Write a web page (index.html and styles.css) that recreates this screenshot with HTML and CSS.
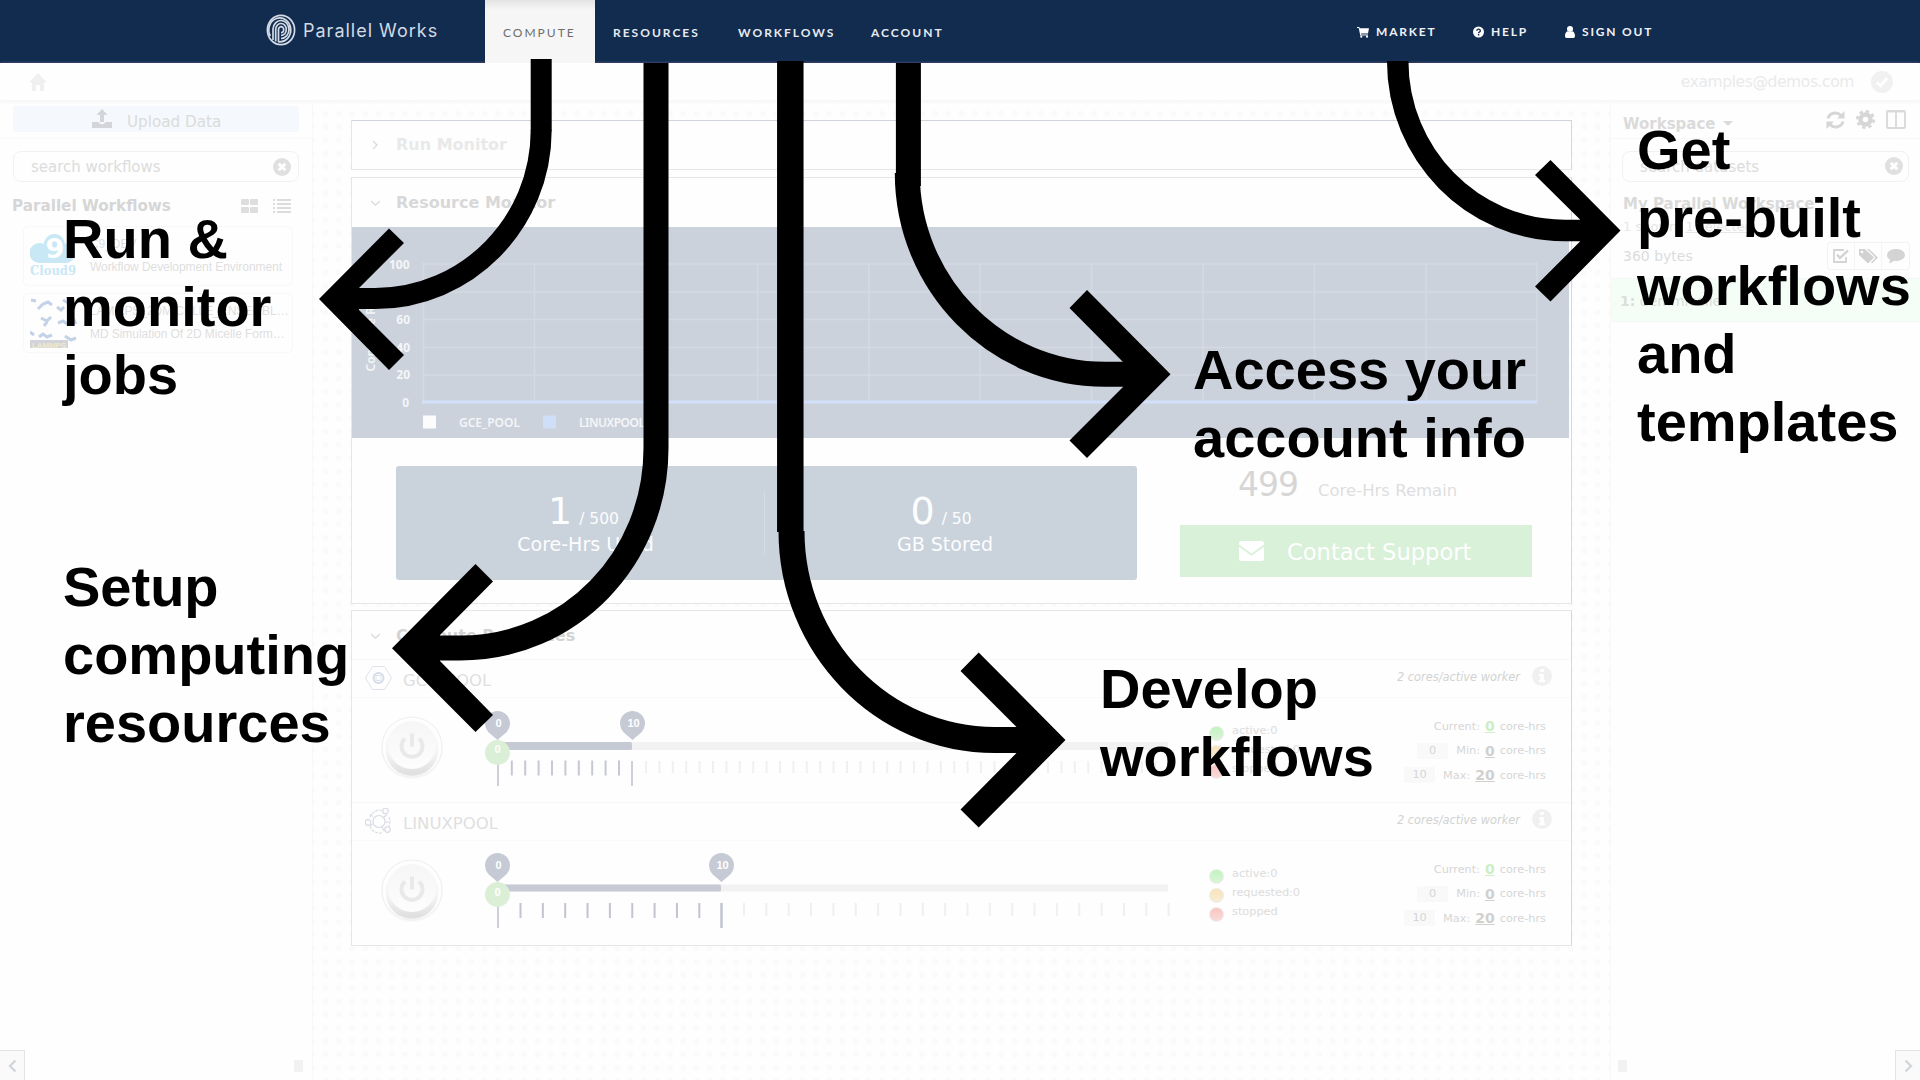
FILE: index.html
```html
<!DOCTYPE html>
<html lang="en">
<head>
<meta charset="utf-8">
<title>Parallel Works - Compute</title>
<link rel="stylesheet" href="styles.css">
</head>
<body>
<svg class="defs" width="0" height="0" aria-hidden="true">
  <defs>
    <linearGradient id="knob" x1="0" y1="0" x2="0" y2="1"><stop offset="0" stop-color="#f6f6f6"/><stop offset="1" stop-color="#fdfdfd"/></linearGradient>
    <linearGradient id="rim" x1="0" y1="0" x2="0" y2="1"><stop offset="0" stop-color="#fdfdfd"/><stop offset=".6" stop-color="#f4f4f4"/><stop offset="1" stop-color="#dedede"/></linearGradient>
    <symbol id="clear" viewBox="0 0 18 18"><circle cx="9" cy="9" r="9" fill="#e0e0e0"/><path d="M5.7 5.7l6.600 6.600M12.300 5.700l-6.600 6.600" stroke="#fff" stroke-width="3"/></symbol>
    <symbol id="info" viewBox="0 0 20 20"><circle cx="10" cy="10" r="10" fill="#f0f0f0"/><path d="M8.300 3h3.400v3H8.300zM7 8h4.800v6H13v2.300H7V14h1.300v-3.700H7z" fill="#fff"/></symbol>
    <symbol id="power" viewBox="0 0 64 68">
      <circle cx="32" cy="34" r="31" fill="#f8f8f8"/><circle cx="32" cy="33" r="30" fill="#fefefe" stroke="#efefef"/>
      <circle cx="32" cy="36" r="26" fill="#e6e6e6"/><circle cx="32" cy="34.500" r="26.500" fill="url(#rim)"/><circle cx="32" cy="31" r="24" fill="url(#knob)"/>
      <path d="M25 24.500a10.500 10.500 0 1 0 14 0M32 19.500v13" fill="none" stroke="#e9e9e9" stroke-width="4"/>
    </symbol>
    <symbol id="pin" viewBox="0 0 25 29"><path d="M12.500 29L3.200 20.900A12.500 12.500 0 1 1 21.800 20.900z" fill="#c5cad4"/></symbol>
  </defs>
</svg>

<header class="topbar">
  <div class="brand">
    <svg width="30" height="32" viewBox="0 0 30 32" fill="none" stroke="#d5dbe5" stroke-width="1.700">
      <ellipse cx="15" cy="16" rx="13.600" ry="14.700"/>
      <path d="M7 26V15a8 9 0 1 1 8 9.500M4.300 22a11 12 0 1 1 8 5.800M9.700 27.500V15.500a5.300 6 0 1 1 5.300 6M12.500 28V16a2.600 3 0 1 1 2.500 2.700"/>
    </svg>
    <span class="brand-name">Parallel Works</span>
  </div>
  <nav class="tabs">
    <a class="tab active">COMPUTE</a>
    <a class="tab">RESOURCES</a>
    <a class="tab">WORKFLOWS</a>
    <a class="tab">ACCOUNT</a>
  </nav>
  <nav class="links">
    <a class="link market"><svg width="12" height="12" viewBox="0 0 12 12" fill="#fff"><path d="M0 1h2.300l.4 1.300H12L11 7.500H4l.2 1H11v1H3.300L1.700 2H0z"/><circle cx="4.300" cy="10.700" r="1.100"/><circle cx="10" cy="10.700" r="1.100"/></svg>MARKET</a>
    <a class="link help"><svg width="11" height="12" viewBox="0 0 12 12"><circle cx="6" cy="6" r="6" fill="#fff"/><path d="M4.200 4.600a1.900 1.700 0 1 1 2.700 1.500q-.8.4-.8 1.200M6.100 8.300v1.500" fill="none" stroke="#122c50" stroke-width="1.500"/></svg>HELP</a>
    <a class="link signout"><svg width="10" height="12" viewBox="0 0 10 12" fill="#fff"><circle cx="5" cy="3" r="3"/><path d="M0 10.300C0 7.500 1 5.800 2.600 5.300q2.400 1.600 4.800 0C9 5.800 10 7.500 10 10.300Q10 12 8.400 12H1.600Q0 12 0 10.300z"/></svg>SIGN OUT</a>
  </nav>
</header>

<div class="userbar">
  <svg class="home" width="18" height="18" viewBox="0 0 18 18" fill="#f0f0f0"><path d="M9 0L18 9.500h-3V18h-4v-6H7v6H3V9.500H0z"/></svg>
  <span class="email">examples@demos.com</span>
  <svg width="22" height="22" viewBox="0 0 22 22"><circle cx="11" cy="11" r="11" fill="#f1f1f1"/><path d="M6 11.500l3.500 3.500L16 7" fill="none" stroke="#fff" stroke-width="2.800"/></svg>
</div>

<div class="workspace">
  <aside class="left">
    <div class="upload-row">
      <div class="upload"><svg width="20" height="19" viewBox="0 0 20 19" fill="#d3d5d8"><path d="M10 0l5.500 6H12v7H8V6H4.500zM0 13h6.500q1 2.300 3.500 2.300t3.500-2.300H20v6H0z"/></svg><span>Upload Data</span></div>
    </div>
    <div class="search"><span class="ph-workflows">search workflows</span><svg width="18" height="18"><use href="#clear"/></svg></div>
    <div class="list-head"><span class="list-title">Parallel Workflows</span>
      <svg width="17" height="14" viewBox="0 0 17 14" fill="#dedede"><rect width="8" height="6" rx="1"/><rect x="9" width="8" height="6" rx="1"/><rect y="8" width="8" height="6" rx="1"/><rect x="9" y="8" width="8" height="6" rx="1"/></svg>
      <svg class="list-icon" width="18" height="14" viewBox="0 0 18 14" fill="#dcdcdc"><path d="M0 0h2v2H0zM4 0h14v2H4zM0 4h2v2H0zM4 4h14v2H4zM0 8h2v2H0zM4 8h14v2H4zM0 12h2v2H0zM4 12h14v2H4z"/></svg>
    </div>
    <div class="flow">
      <svg width="48" height="46" viewBox="0 0 48 46"><path d="M9 30a9 9.500 0 0 1 0-20c2 0 3 .2 4.500 1C15 5 19 1 24 1c6 0 10 4 11 9.500 6 0 10 4 10 9.500s-4 10-9 10z" fill="#c9e8f5"/><text x="15.500" y="25" class="c9-digit">9</text><text x="0" y="42" class="c9-name" textLength="46" lengthAdjust="spacingAndGlyphs">Cloud9</text></svg>
      <div class="flow-text"><span>C9_DEV</span><span>Workflow Development Environment</span></div>
    </div>
    <div class="flow">
      <svg width="48" height="50" viewBox="0 0 48 50"><g fill="none" stroke="#c3d2e6" stroke-width="3"><path d="M1 2l5 1M8 11l5-5 5-2 4 3M27 9l4 3 3-3M33 2l7 4M11 20l6 3 4-4M17 24l-3 4M28 25l5-2 4 3M43 20l3 6M0 34l4 3M9 39l4-3 4 3 5-2M35 38l6 4 5-2M44 3v8"/></g><rect y="42" width="38" height="8" fill="#d3d3dc"/><text x="2" y="49.500" class="lammps" textLength="34">LAMMPS</text></svg>
      <div class="flow-text"><span>LAMMPS_2DMICELLE_ENSEMBL…</span><span>MD Simulation Of 2D Micelle Form…</span></div>
    </div>
    <div class="foot foot-left"><div class="collapse"><svg width="9" height="14" viewBox="0 0 9 14" fill="none" stroke="#d2d6da" stroke-width="2.400"><path d="M7.500 1.500L2 7l5.500 5.500"/></svg></div><div class="grip"></div></div>
  </aside>

  <main class="main">
    <section class="panel run"><div class="panel-head faint"><svg width="9" height="10" viewBox="0 0 9 10"><path d="M2 1l4 4-4 4"/></svg><h2>Run Monitor</h2></div></section>

    <section class="panel monitor">
      <div class="panel-head"><svg width="9" height="10" viewBox="0 0 9 10"><path d="M0 3l4.500 4L9 3"/></svg><h2>Resource Monitor</h2></div>
      <div class="chart">
        <svg width="1217" height="211" viewBox="1 0.500 1217 211">
          <path d="M72 37.500H1186M72 65.500H1186M72 93H1186M72 121H1186M72 148.500H1186M72.500 36V176M183.500 36V176M295 36V176M406.500 36V176M518 36V176M629 36V176M740.500 36V176M852 36V176M963.500 36V176M1075 36V176M1186 36V176" stroke="#d3dae3" stroke-width="1.500"/>
          <path d="M71 175.500H1186" stroke="#d2e0f9" stroke-width="3"/>
          <g class="axis" text-anchor="end"><text x="58.500" y="42">100</text><text x="59" y="69">80</text><text x="59" y="97">60</text><text x="59" y="125">40</text><text x="59" y="152">20</text><text x="58" y="180">0</text></g>
          <text class="axis key" transform="translate(24 145) rotate(-90)">Compute Rate</text>
          <rect x="72" y="189" width="13" height="13" fill="#fcfcfc"/><text class="axis key" x="108" y="200.500" textLength="61">GCE_POOL</text>
          <rect x="192" y="189" width="13" height="13" fill="#d0dff8"/><text class="axis key" x="228" y="200.500" textLength="66">LINUXPOOL</text>
        </svg>
      </div>
      <div class="usage">
        <div class="stats">
          <div class="stat used"><div class="stat-line"><b>1</b><span>/ 500</span></div><div class="stat-name">Core-Hrs Used</div></div>
          <div class="divider"></div>
          <div class="stat stored"><div class="stat-line"><b>0</b><span>/ 50</span></div><div class="stat-name">GB Stored</div></div>
        </div>
        <div class="remain">
          <div class="remain-line"><span class="num">499</span><span class="cap">Core-Hrs Remain</span></div>
          <div class="support"><svg width="25" height="20" viewBox="0 0 25 20" fill="#fff"><path d="M0 3V2.500Q0 0 2.500 0h20Q25 0 25 2.500V3.500L12.500 12.500 0 3.500zM0 5.800l12.500 9L25 5.800V17.500Q25 20 22.500 20h-20Q0 20 0 17.500z"/></svg><span>Contact Support</span></div>
        </div>
      </div>
    </section>

    <section class="panel compute">
      <div class="panel-head"><svg width="9" height="10" viewBox="0 0 9 10"><path d="M0 3l4.500 4L9 3"/></svg><h2>Compute Resources</h2></div>

      <div class="pool-head">
        <svg class="pool-icon" width="27" height="24" viewBox="0 0 27 24" fill="none" stroke="#dfe2ea"><path d="M7.500.5h12L26.500 12l-7 11.500h-12L.5 12z"/><circle cx="13.500" cy="12" r="5" stroke="#d6dde8" stroke-width="2"/><rect x="11" y="9.500" width="5" height="5"/></svg>
        <span class="pool-name">GCE_POOL</span><em>2 cores/active worker</em><svg class="pool-info" width="20" height="20"><use href="#info"/></svg>
      </div>
      <div class="pool">
        <svg class="power" width="64" height="68"><use href="#power"/></svg>
        <svg class="slider" width="700" height="90" viewBox="0 0 700 90">
          <rect x="14" y="35" width="671" height="8" fill="#f2f2f2"/><rect x="14" y="35" width="135" height="8" rx="1.500" fill="#c5cad4"/>
          <path d="M27.800 61H148" stroke="#c6c8d2" stroke-width="15" stroke-dasharray="2 11.400"/>
          <path d="M162 60H686" stroke="#f0f0f0" stroke-width="12" stroke-dasharray="2 11.400"/>
          <path d="M15 54v25M149 54v25" stroke="#cdd0d7" stroke-width="2"/>
          <use href="#pin" x="2" y="4" width="25" height="29"/><use href="#pin" x="137" y="4" width="25" height="29"/>
          <circle cx="14.500" cy="45.500" r="12.500" fill="#daefd5"/>
          <g class="pin-text"><text x="15.500" y="20">0</text><text x="150.500" y="20">10</text><text x="14.500" y="46">0</text></g>
        </svg>
        <ul class="status"><li><i class="led green"></i>active:0</li><li><i class="led amber"></i>requested:0</li><li><i class="led red"></i>stopped</li></ul>
        <div class="limits"><div><span>Current:</span><b class="on">0</b><span>core-hrs</span></div><div><span class="field">0</span><span>Min:</span><b>0</b><span>core-hrs</span></div><div><span class="field">10</span><span>Max:</span><b>20</b><span>core-hrs</span></div></div>
      </div>

      <div class="pool-head">
        <svg class="pool-icon" width="27" height="26" viewBox="0 0 27 26" fill="none" stroke="#d9dce4" stroke-width="1.200"><circle cx="14" cy="13.500" r="6"/><path d="M5 9a10.500 10.500 0 0 1 12-6.500M24 9q2 4.500 0 9M17 25Q8 26 5 18" stroke-dasharray="3 1"/><path d="M8 8.500l-3-2M19 9l3-2M17 19l2 4M7.500 16l-2.500 2M20 14h4"/><circle cx="3" cy="14.500" r="2.800"/><circle cx="20.500" cy="3" r="2.800"/><circle cx="22.500" cy="21.500" r="2.800"/></svg>
        <span class="pool-name">LINUXPOOL</span><em>2 cores/active worker</em><svg class="pool-info" width="20" height="20"><use href="#info"/></svg>
      </div>
      <div class="pool">
        <svg class="power" width="64" height="68"><use href="#power"/></svg>
        <svg class="slider" width="700" height="90" viewBox="0 0 700 90">
          <rect x="14" y="34.500" width="671" height="7" fill="#f2f2f2"/><rect x="14" y="34.500" width="224" height="7" rx="1.500" fill="#c5cad4"/>
          <path d="M36.500 60.500H237" stroke="#c2c4d0" stroke-width="15" stroke-dasharray="2 20.350"/>
          <path d="M260 59.500H687" stroke="#f0f0f0" stroke-width="13" stroke-dasharray="2 20.350"/>
          <path d="M15 53v25" stroke="#cdd0d7" stroke-width="2"/><path d="M238.500 53v25" stroke="#c2c4d0" stroke-width="2.500"/>
          <use href="#pin" x="2" y="3" width="25" height="29"/><use href="#pin" x="226" y="3" width="25" height="29"/>
          <circle cx="14.500" cy="44.500" r="12.500" fill="#daefd5"/>
          <g class="pin-text"><text x="15.500" y="19">0</text><text x="239.500" y="19">10</text><text x="14.500" y="46">0</text></g>
        </svg>
        <ul class="status"><li><i class="led green"></i>active:0</li><li><i class="led amber"></i>requested:0</li><li><i class="led red"></i>stopped</li></ul>
        <div class="limits"><div><span>Current:</span><b class="on">0</b><span>core-hrs</span></div><div><span class="field">0</span><span>Min:</span><b>0</b><span>core-hrs</span></div><div><span class="field">10</span><span>Max:</span><b>20</b><span>core-hrs</span></div></div>
      </div>
    </section>
  </main>

  <aside class="right">
    <div class="ws-head">
      <b class="ws-title">Workspace</b><i class="caret"></i>
      <svg width="19" height="18" viewBox="0 0 19 18" fill="none" stroke="#d6d6d6" stroke-width="3"><path d="M2 7.500A7.500 7 0 0 1 15 4.500M17 10.500A7.500 7 0 0 1 4 13.500"/><path d="M18.500 0v7.500h-7.500zM.5 18v-7.500H8z" fill="#d6d6d6" stroke="none"/></svg>
      <svg width="19" height="19" viewBox="0 0 19 19"><circle cx="9.500" cy="9.500" r="5" fill="none" stroke="#d6d6d6" stroke-width="4.400"/><circle cx="9.500" cy="9.500" r="8.200" fill="none" stroke="#d6d6d6" stroke-width="2.600" stroke-dasharray="3.300 3.140"/></svg>
      <svg width="20" height="19" viewBox="0 0 20 19" fill="none" stroke="#d9d9d9" stroke-width="1.800"><rect x="1" y="1" width="18" height="17" rx="1"/><path d="M10 1v17M1 1.700h18"/></svg>
    </div>
    <div class="search"><span class="ph-data">search datasets</span><svg width="18" height="18"><use href="#clear"/></svg></div>
    <b class="ws-name">My Parallel Workspace</b>
    <div class="shown">1 shown, <u>1 selected</u></div>
    <div class="bytes-row"><span>360 bytes</span>
      <div class="tools">
        <span><svg width="16" height="14" viewBox="0 0 16 14" fill="none" stroke="#d4d4d4" stroke-width="1.800"><path d="M13 8v5H1V1h10"/><path d="M4 5.500L7 9l8-7.500" stroke-width="2.400"/></svg></span>
        <span><svg width="19" height="15" viewBox="0 0 19 15" fill="#d2d2d2"><path d="M0 0h6l9 8.500-6 6L0 6zM8 0h2l9 8.500-6 6-1-1 4.500-5z"/><circle cx="3" cy="3" r="1.300" fill="#fff"/></svg></span>
        <span><svg width="18" height="15" viewBox="0 0 18 15" fill="#d4d4d4"><path d="M9 0c5 0 9 2.600 9 6s-4 6-9 6c-.8 0-1.500 0-2.200-.2C5.500 13.200 4 14.200 1.500 14.500 2.700 13.500 3 12.300 3 10.700 1 9.700 0 8 0 6c0-3.400 4-6 9-6z"/></svg></span>
      </div>
    </div>
    <div class="dataset"><b>1:</b> demmicelle</div>
    <div class="foot foot-right"><div class="grip"></div><div class="collapse"><svg width="9" height="14" viewBox="0 0 9 14" fill="none" stroke="#d2d6da" stroke-width="2.400"><path d="M1.500 1.500L7 7l-5.500 5.500"/></svg></div></div>
  </aside>
</div>

<svg class="arrows" width="1920" height="1080" viewBox="0 0 1920 1080">
  <g fill="none" stroke="#000">
    <path stroke-width="21" d="M541.200 130C541.200 223 467 298.500 375 298.500H345"/>
    <path stroke-width="15" d="M538.200 59V131M544.200 59V131"/>
    <path stroke-width="25" d="M656 63V448C656 558.500 570 648 460 648H420"/>
    <path stroke-width="26.500" d="M790.300 61V532"/>
    <path stroke-width="26" d="M791.500 531C791.500 646 882 740 995 740H1040"/>
    <path stroke-width="25" d="M908.400 63V186"/>
    <path stroke-width="25" d="M907.300 173C907.300 284 996 374.300 1105 374.300H1145"/>
    <path stroke-width="21.500" d="M1397.700 61C1397.700 154 1472 230.500 1565 230.500H1600"/>
  </g>
  <path d="M319 299L389 228.500 404 243 359 288V310L404 355 389 370z"/>
  <path d="M392 648.300L475.500 564 493 581.500 440 635V661L493 715 475.500 732z"/>
  <path d="M1065.500 740L978.700 652.500 960.500 671 1016.500 727V753L960.500 809.500 978.700 827.500z"/>
  <path d="M1170.500 374.300L1087 290 1069.500 308 1123 362V387L1069.500 440.500 1087 458z"/>
  <path d="M1620.500 230.500L1550.500 160 1535 175 1580 219.500V241.500L1535 286.500 1550.500 301.500z"/>
</svg>
<div class="note note-run">Run &amp;<br>monitor<br>jobs</div>
<div class="note note-setup">Setup<br>computing<br>resources</div>
<div class="note note-develop">Develop<br>workflows</div>
<div class="note note-account">Access your<br>account info</div>
<div class="note note-market">Get<br>pre-built<br>workflows<br>and<br>templates</div>
</body>
</html>
```

FILE: styles.css
```css
* { box-sizing: border-box; }
html, body { margin: 0; height: 100%; overflow: hidden; }
body {
  position: relative;
  display: flex;
  flex-direction: column;
  width: 1920px;
  height: 1080px;
  background: #fefefe;
  font-family: "DejaVu Sans", sans-serif;
  color: #d8d8d8;
}
svg { display: block; flex: none; }
span, a, b, em, h2 { white-space: nowrap; }
.defs { position: absolute; }

/* top bar */
.topbar { display: flex; flex: none; height: 63px; background: #122c50; border-bottom: 1px solid #0b1445; }
.brand { display: flex; align-items: center; gap: 7px; width: 485px; padding: 0 0 2px 266px; }
.brand-name { padding-top: 2px; font: 400 18px/20px Inter, sans-serif; letter-spacing: 1px; color: #d3dae4; }
.tabs { display: flex; font: 700 12px/63px Lato, sans-serif; letter-spacing: 2px; color: #e6eaf0; width: 872px; }
.tab { width: 125px; padding: 1px 0 0 18px; height: 62px; }
.tab.active { width: 110px; height: 63px; background: linear-gradient(#e4e4e4, #f6f6f6 10px); color: #6d6d6d; font-weight: 400; }
.tab:nth-child(3) { width: 133px; }
.links { display: flex; font: 700 12px/61px Lato, sans-serif; letter-spacing: 1.800px; color: #eef1f5; }
.link { display: flex; align-items: center; gap: 7px; padding-top: 1px; }
.market { width: 116px; }
.help { width: 92px; }

/* user bar */
.userbar { display: flex; flex: none; align-items: center; height: 38px; padding: 0 27px 0 29px; border-bottom: 1px solid #f8f8f8; box-shadow: 0 1px 3px #f3f3f3; }
.email { margin: 1px 17px 0 auto; font-size: 15.500px; letter-spacing: -.4px; color: #eaeaea; }

.workspace { display: grid; grid-template-columns: 313px 1297px 310px; flex: 1; min-height: 0; }
.left, .right { display: flex; flex-direction: column; min-width: 0; }
.left { border-right: 1px solid #f8f8f8; }
.right { border-left: 1px solid #f8f8f8; }

/* left column */
.upload-row { height: 38px; padding: 5px 13px; border-bottom: 1px solid #fafafa; }
.upload { display: flex; align-items: center; height: 26px; padding-left: 79px; gap: 15px; border-radius: 3px; background: #f5f8fd; font-size: 15.200px; color: #dadcda; }
.upload svg { margin-top: -1px; }
.upload span { padding-top: 6px; }
.search { display: flex; align-items: center; justify-content: space-between; flex: none; height: 31px; margin: 12px 13px 0; padding: 0 7px 0 17px; border: 1px solid #f1f1f1; border-radius: 8px; font-size: 15px; color: #dcdcdc; }
.list-head { display: flex; align-items: center; height: 44px; padding: 3px 21px 0 12px; }
.list-title { margin-right: auto; font-weight: 700; font-size: 15.200px; color: #d6d6d6; }
.list-icon { margin-left: 15px; }
.flow { display: flex; align-items: center; gap: 12px; height: 60px; margin: 0 19px 7px 23px; padding-left: 6px; border: 1px solid #f8f8f8; border-radius: 5px; }
.flow-text { display: flex; flex-direction: column; gap: 8px; font: 12px/15px "Liberation Sans", sans-serif; letter-spacing: -.06px; color: #dedede; }
.c9-digit { font: 700 27px "DejaVu Sans", sans-serif; fill: #fff; }
.c9-name { font: 700 12px "DejaVu Serif", serif; fill: #c9e8f5; }
.lammps { font: 700 8px "Liberation Sans", sans-serif; fill: #efeac8; }
.foot { display: flex; justify-content: space-between; align-items: flex-end; margin-top: auto; height: 30px; }
.collapse { display: flex; align-items: center; justify-content: center; width: 25px; height: 30px; border: 1px solid #e4e4e4; border-bottom: 0; background: #fafafa; }
.foot-left .collapse { border-left: 0; }
.foot-right .collapse { border-right: 0; }
.grip { width: 9px; height: 12px; margin: 0 9px 8px 7px; background: #f2f2f2; }

/* centre column */
.main { padding: 19px 38px 0; background: radial-gradient(circle, #fafafa 2.600px, transparent 3.400px) 6px 6px / 13.250px 13.250px; }
.panel { display: flex; flex-direction: column; width: 1221px; border: 1px solid #e4e6e9; border-right-color: #d6d8de; background: #fefefe; }
.panel-head { display: flex; align-items: center; gap: 16px; flex: none; padding-left: 19px; height: 48px; color: #d8d8d8; }
.panel-head path { fill: none; stroke: #dcdcdc; stroke-width: 1.400; }
.panel-head h2 { margin: 0; font-size: 16px; line-height: 20px; }
.panel-head.faint { color: #e9e9e9; }
.run { height: 50px; margin-bottom: 7px; border-top-color: #cfd4dc; }
.monitor { height: 427px; margin-bottom: 6px; }
.monitor .panel-head { height: 49px; }
.compute { height: 336px; }
.compute .panel-head { height: 48px; padding-top: 2px; }
.compute h2 { color: #d3d3d3; }
.chart { flex: none; height: 211px; margin-right: 2px; background: #cbd2dc; }
.axis { font: 700 12px "Noto Sans", sans-serif; fill: #f4f6f8; }
.key { font-weight: 600; }
.usage { display: flex; gap: 43px; padding: 28px 38px 0 44px; }
.stats { display: flex; width: 741px; height: 114px; padding-top: 25px; border-radius: 3px; background: #cad2dc; color: #fcfdfd; }
.stat { display: flex; flex-direction: column; align-items: center; width: 368px; }
.stat-line { display: flex; align-items: baseline; gap: 7px; height: 41px; line-height: 41px; }
.stat-line b { font-weight: 400; font-size: 38px; }
.stat-line span { font-size: 15.500px; }
.stat-name { font-size: 19px; line-height: 24px; }
.used { padding-left: 11px; }
.used .stat-line { padding-right: 4px; }
.stored { width: 360px; }
.stored .stat-line { padding-right: 8px; }
.divider { width: 1px; height: 64px; background: #d5dbe4; }
.remain { width: 352px; }
.remain-line { display: flex; align-items: baseline; gap: 20px; height: 59px; padding: 1px 0 0 58px; line-height: 35px; color: #d6d6d6; }
.num { font-size: 33px; letter-spacing: -1px; }
.cap { font-size: 16.500px; color: #dedede; }
.support { display: flex; align-items: center; height: 52px; padding-left: 59px; gap: 23px; background: #d9f0d9; color: #fff; font-size: 22.600px; }
.support span { padding-top: 1px; }

/* pools */
.pool-head { display: flex; align-items: center; flex: none; height: 39px; padding: 0 19px 0 13px; border-top: 1px solid #f7f7f7; border-bottom: 1px solid #fafafa; }
.pool-icon { margin-top: -1px; }
.pool-info { margin-top: -5px; }
.pool-name { margin: 4px auto 0 11px; font-size: 16.500px; color: #dfdfdf; }
.pool-head em { margin: -4px 12px 0 0; font-size: 11.400px; color: #d2d2d2; }
.pool { display: flex; flex: none; height: 104px; }
.power { margin: 16px 0 0 28px; }
.slider { margin: 9px 0 0 39px; }
.pin-text { font: 700 11px "Liberation Sans", sans-serif; fill: #fff; text-anchor: middle; }
.status { width: 160px; margin: 24px 0 0 26px; padding: 0; list-style: none; font-size: 11.300px; color: #dcdcdc; }
.status li { display: flex; align-items: center; gap: 8px; height: 18.700px; line-height: 18px; }
.led { width: 15px; height: 15px; margin-top: 5px; border-radius: 50%; border: 1px solid #ececec; }
.green { background: linear-gradient(#c0f5bd, #dcf3da); }
.amber { background: linear-gradient(#fae3bb, #f7edd5); }
.red { background: linear-gradient(#f9c4c0, #f8dcd9); }
.limits { display: flex; flex-direction: column; width: 177px; padding-top: 16px; font-size: 11.300px; color: #d6d6d6; }
.limits div { display: flex; align-items: center; justify-content: flex-end; gap: 5px; height: 24.500px; }
.limits b { font-size: 14px; text-decoration: underline; color: #d0d0d0; }
.limits .on { color: #cdeec4; }
.field { width: 31px; height: 16px; margin-right: 3px; line-height: 16px; text-align: center; background: #f9f9f9; }

/* right column */
.ws-head { display: flex; align-items: center; height: 38px; padding: 0 14px 0 12px; gap: 11px; border-bottom: 1px solid #f7f7f7; }
.ws-title { margin-right: -4px; font-size: 15px; padding-top: 8px; color: #dadada; }
.caret { margin: 7px auto 0 0; border: 5px solid transparent; border-top-color: #dadada; border-bottom: 0; }
.right .search { margin: 12px 11px 0 11px; padding-right: 5px; }
.right .search svg { margin-top: -2px; }
.ws-name { margin: 12px 0 0 12px; font-size: 15px; line-height: 20px; color: #dadada; }
.shown { margin: 3px 0 0 12px; font-size: 13px; line-height: 20px; color: #e6e6e6; }
.bytes-row { display: flex; align-items: center; justify-content: space-between; height: 28px; margin: 5px 10px 8px 12px; font-size: 14px; color: #dcdcdc; }
.tools { display: flex; border: 1px solid #f2f2f2; border-radius: 3px; }
.tools span { display: flex; align-items: center; justify-content: center; width: 27px; height: 26px; border-right: 1px solid #f4f4f4; }
.tools span:last-child { border: 0; }
.dataset { height: 44px; padding-left: 9px; line-height: 45px; font-size: 14px; background: #f5fdf7; border-top: 1px solid #f3f8f4; border-bottom: 1px solid #f3f8f4; color: #dadfda; }

/* callouts laid over the page */
.arrows { position: absolute; left: 0; top: 0; }
.note { position: absolute; font: 700 56px/68px "Liberation Sans", sans-serif; color: #000; white-space: nowrap; }
.note-run { left: 63px; top: 205px; }
.note-setup { left: 63px; top: 553px; }
.note-develop { left: 1100px; top: 655px; }
.note-account { left: 1193px; top: 336px; }
.note-market { left: 1637px; top: 116px; }
```
